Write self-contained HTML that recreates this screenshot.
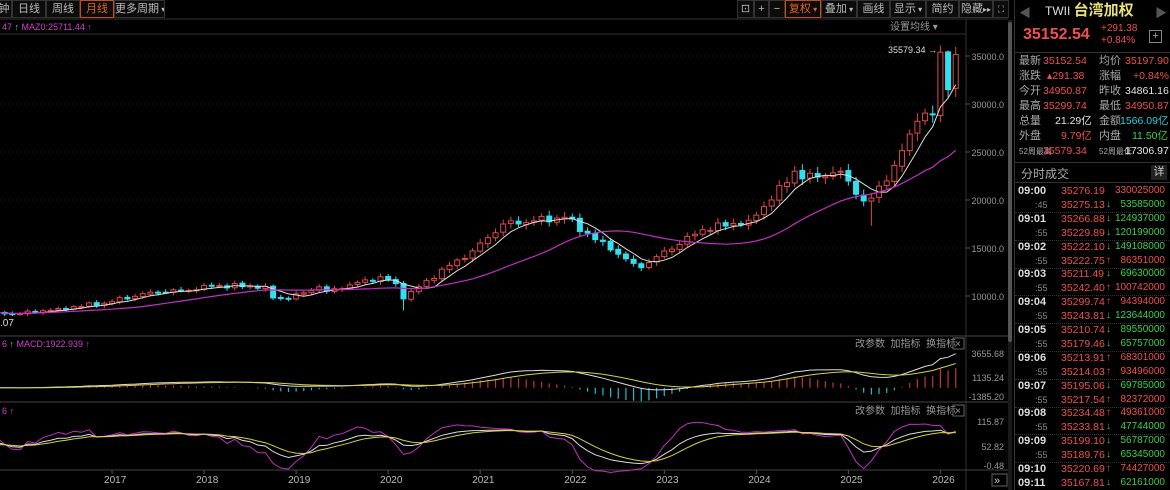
<!DOCTYPE html>
<html><head><meta charset="utf-8">
<style>
*{margin:0;padding:0;box-sizing:border-box}
body{width:1170px;height:490px;background:#000;overflow:hidden;font-family:"Liberation Sans","Noto Sans CJK SC",sans-serif;color:#ccc;position:relative}
.tb{position:absolute;top:0;height:18px;border:1px solid #333;background:#0c0c0c;font-size:11px;line-height:16px;text-align:center;color:#bbb;white-space:nowrap;overflow:hidden}
.tb small{font-size:8px}
.tb.on{border-color:#c0501e;color:#e0641e}
#chart{position:absolute;left:0;top:0}
.rp{position:absolute;left:1014px;top:0;width:156px;height:490px;border-left:1px solid #333;font-size:11px}
.row{position:absolute;left:4px;width:152px;height:15px;line-height:15px;white-space:nowrap}
.row span{position:absolute}
.row span.r,.row span.w,.row span.c,.row span.g{font-size:10.5px}
.r{color:#f05050}.g{color:#3ad24a}.w{color:#e6e6e6}.c{color:#2fd0e0}.lb{color:#aaa}
.tr{position:absolute;left:0;width:156px;height:14px;line-height:14px;font-size:10px;white-space:nowrap}
.tr span{position:absolute}
</style></head><body>
<svg id="chart" width="1014" height="490" xmlns="http://www.w3.org/2000/svg" font-family="Liberation Sans, Noto Sans CJK SC, sans-serif"></svg>

<div class="tb" style="left:-4px;width:16px">钟</div>
<div class="tb" style="left:12px;width:34px">日线</div>
<div class="tb" style="left:46px;width:34px">周线</div>
<div class="tb on" style="left:80px;width:34px">月线</div>
<div class="tb" style="left:114px;width:51px">更多周期<small> ▾</small></div>

<div class="tb" style="left:737px;width:17px">⊡</div>
<div class="tb" style="left:754px;width:15px">+</div>
<div class="tb" style="left:769px;width:16px">−</div>
<div class="tb on" style="left:785px;width:36px">复权<small> ▾</small></div>
<div class="tb" style="left:821px;width:36px">叠加<small> ▾</small></div>
<div class="tb" style="left:857px;width:33px">画线</div>
<div class="tb" style="left:890px;width:36px">显示<small> ▾</small></div>
<div class="tb" style="left:926px;width:33px">简约</div>
<div class="tb" style="left:959px;width:34px">隐藏<small>▸▸</small></div>
<div class="tb" style="left:993px;width:16px;font-size:9px">⛶</div>

<div class="rp">
  <div style="position:absolute;left:4px;top:4px;color:#555;font-size:12px">◀</div>
  <div style="position:absolute;left:30px;top:1px;font-size:12px;line-height:20px;color:#ddd">TWII <span style="color:#e8e070;font-size:15px;font-weight:bold">台湾加权</span></div>
  <div style="position:absolute;right:3px;top:4px;color:#555;font-size:12px">▶</div>
  <div style="position:absolute;left:8px;top:26px;color:#f05050;font-size:16px;font-weight:bold">35152.54</div>
  <div style="position:absolute;left:86px;top:23px;color:#f05050;font-size:10px;line-height:12px">+291.38<br>+0.84%</div>
  <div style="position:absolute;left:134px;top:30px;width:13px;height:13px;border:1px solid #888;color:#aaa;font-size:11px;line-height:11px;text-align:center">+</div>
  <div style="position:absolute;left:0;top:52px;width:156px;border-top:1px solid #333"></div>
  <div class="row" style="top:54px"><span class="lb">最新</span><span class="r" style="left:24px">35152.54</span><span class="lb" style="left:80px">均价</span><span class="r" style="left:106px">35197.90</span></div>
  <div class="row" style="top:69px"><span class="lb">涨跌</span><span class="r" style="left:28px">▴291.38</span><span class="lb" style="left:80px">涨幅</span><span class="r" style="left:114px">+0.84%</span></div>
  <div class="row" style="top:84px"><span class="lb">今开</span><span class="r" style="left:24px">34950.87</span><span class="lb" style="left:80px">昨收</span><span class="w" style="left:106px">34861.16</span></div>
  <div class="row" style="top:99px"><span class="lb">最高</span><span class="r" style="left:24px">35299.74</span><span class="lb" style="left:80px">最低</span><span class="r" style="left:106px">34950.87</span></div>
  <div class="row" style="top:114px"><span class="lb">总量</span><span class="w" style="left:36px">21.29亿</span><span class="lb" style="left:80px">金额</span><span class="c" style="left:101px">1566.09亿</span></div>
  <div class="row" style="top:129px"><span class="lb">外盘</span><span class="r" style="left:42px">9.79亿</span><span class="lb" style="left:80px">内盘</span><span class="g" style="left:113px">11.50亿</span></div>
  <div class="row" style="top:144px;font-size:8px"><span class="lb">52周最高</span><span class="r" style="left:24px">35579.34</span><span class="lb" style="left:80px">52周最低</span><span class="w" style="left:106px">17306.97</span></div>
  <div style="position:absolute;left:0;top:162px;width:156px;border-top:1px solid #333"></div>
  <div style="position:absolute;left:6px;top:165px;color:#aaa;font-size:12px">分时成交</div>
  <div style="position:absolute;right:3px;top:165px;width:16px;height:15px;background:#222;color:#ccc;font-size:11px;text-align:center;line-height:15px">详</div>
  <div style="position:absolute;left:0;top:182px;width:156px;border-top:1px solid #333"></div>
  <div id="trades"></div>
</div>
<div style="position:absolute;left:1008px;top:20px;width:4px;height:470px;background:#1a1a1a"></div>
<div style="position:absolute;left:1008px;top:22px;width:4px;height:320px;background:#555;border-radius:2px"></div>

<script>
const svg=document.getElementById('chart');
let h='';
function L(x1,y1,x2,y2,c,w,d){h+=`<line x1="${x1}" y1="${y1}" x2="${x2}" y2="${y2}" stroke="${c}" stroke-width="${w||1}" ${d?'stroke-dasharray="'+d+'"':''}/>`;}
function T(x,y,t,c,s,a){h+=`<text x="${x}" y="${y}" fill="${c}" font-size="${s||10}" ${a?'text-anchor="'+a+'"':''}>${t}</text>`;}
L(0,19,1008,19,'#333');L(0,34,965,34,'#333');
L(966,19,966,490,'#333');
L(0,336,1008,336,'#444');L(0,402,1008,402,'#444');L(0,470,1008,470,'#444');
const py=v=>56+(35000-v)*0.0096;
[35000,30000,25000,20000,15000,10000].forEach(v=>{L(0,py(v),966,py(v),'#2a1a1a',1,'1 3');T(1004,py(v)+4,v.toFixed(1),'#999',9,'end');L(966,py(v),970,py(v),'#555');});
T(2,30,'47 <tspan fill="#aaa">↑</tspan> MAZ0:25711.44 ↑','#d040d0',9);
T(890,30,'设置均线 ▾','#999',10);
const A=[[0,8200],[4,8150],[9,8700],[15,9250],[21,10400],[27,10650],[28,11100],[36,11000],[37,9800],[39,9730],[43,10950],[44,10500],[51,12000],[53,11300],[54,9700],[57,11600],[63,14700],[67,17500],[75,18200],[81,14800],[84,13400],[85,12950],[87,14100],[93,16900],[99,17900],[102,20000],[105,23000],[106,22200],[111,23000],[114,19900],[115,20200],[118,23600],[121,28200],[123,28900],[124,35400],[125,31500],[126,35152]];
const N=127;let C=[];
for(let m=0;m<N;m++){let i=0;while(A[i+1]&&A[i+1][0]<m)i++;let a=A[i],b=A[i+1]||A[i];
 let v=(b[0]==a[0])?a[1]:a[1]+(b[1]-a[1])*(m-a[0])/(b[0]-a[0]);
 let isA=A.some(q=>q[0]==m);if(!isA)v*=1+0.025*Math.sin(m*2.3)*Math.cos(m*0.7);C.push(v);}
const X=m=>20+(m-4)*7.67;
let O=[],H=[],Lo=[];
for(let m=0;m<N;m++){O[m]=m?C[m-1]*(1+0.004*Math.sin(m*5)):C[m]*0.98;let hi=Math.max(O[m],C[m]),lo=Math.min(O[m],C[m]);H[m]=hi*(1+0.015+0.015*Math.abs(Math.sin(m*1.7)));Lo[m]=lo*(1-0.015-0.015*Math.abs(Math.cos(m*1.3)));}
Lo[54]=8500;Lo[115]=17306;H[125]=35579;
function ma(n){return C.map((v,i)=>{let s=0,k=0;for(let j=Math.max(0,i-n+1);j<=i;j++){s+=C[j];k++;}return s/k;});}
function poly(arr,fy,c,w){h+=`<polyline fill="none" stroke="${c}" stroke-width="${w||1}" points="${arr.map((v,i)=>X(i).toFixed(1)+','+fy(v).toFixed(1)).join(' ')}"/>`;}
for(let m=0;m<N;m++){let x=X(m);if(x<0||x>962)continue;let up=C[m]>=O[m];let col=up?'#e04848':'#30e0f0';
 L(x,py(H[m]),x,py(Lo[m]),col);let t=py(Math.max(O[m],C[m])),b=py(Math.min(O[m],C[m]));if(b-t<1)b=t+1;
 h+=`<rect x="${x-2.5}" y="${t}" width="5" height="${b-t}" fill="${up?'#000':col}" stroke="${col}" stroke-width="1"/>`;}
poly(ma(5),py,'#ddd',1);poly(ma(20),py,'#c030c0',1.2);
T(888,53,'35579.34 →','#ddd',9);
T(0,326,'.07','#ddd',10);
function ema(a,n){let r=[],k=2/(n+1);a.forEach((v,i)=>r.push(i?r[i-1]+(v-r[i-1])*k:v));return r;}
let e12=ema(C,12),e26=ema(C,26),dif=e12.map((v,i)=>v-e26[i]),dea=ema(dif,9);
const my=v=>377-(v-1135)*0.0095;const mz=my(0);
for(let m=0;m<N;m++){let x=X(m);if(x<0||x>962)continue;let b=2*(dif[m]-dea[m]);L(x,mz,x,my(b),b>=0?'#c03838':'#20c0d0',1.2);}
poly(dif,my,'#ddd');poly(dea,my,'#d8d040');
T(2,347,'6 <tspan fill="#c0b040">↑</tspan> MACD:1922.939 ↑','#d040d0',9);
T(855,347,'改参数 &#160;加指标 &#160;换指标','#999',10);
h+='<rect x="953" y="338" width="11" height="11" fill="none" stroke="#666"/>';T(955,347,'×','#999',10);
[[3655.68,353],[1135.24,377],[-1385.20,396]].forEach(a=>{T(1004,a[1]+4,a[0].toFixed(2),'#999',9,'end');});
let K=[],D=[],J=[];let kp=50,dp=50;
for(let m=0;m<N;m++){let hh=-1e9,ll=1e9;for(let j=Math.max(0,m-8);j<=m;j++){hh=Math.max(hh,H[j]);ll=Math.min(ll,Lo[j]);}
 let rsv=(C[m]-ll)/(hh-ll)*100;kp=kp*2/3+rsv/3;dp=dp*2/3+kp/3;K.push(kp);D.push(dp);J.push(3*kp-2*dp);}
const ky=v=>446-(v-52.82)*0.4;
poly(J,ky,'#c030c0');poly(K,ky,'#ddd');poly(D,ky,'#d8d040');
T(2,414,'6 ↑','#d040d0',9);
T(855,414,'改参数 &#160;加指标 &#160;换指标','#999',10);
h+='<rect x="953" y="405" width="11" height="11" fill="none" stroke="#666"/>';T(955,414,'×','#999',10);
[[115.87,421],[52.82,446],[-0.48,465]].forEach(a=>{T(1004,a[1]+4,a[0].toFixed(2),'#999',9,'end');});
for(let y=2017;y<=2026;y++){let x=20+(12*(y-2016))*7.67;L(x,470,x,474,'#555');T(x-8,483,y,'#bbb',10);}
h+='<rect x="992" y="474" width="15" height="12" fill="none" stroke="#666"/>';T(994,484,'»','#ccc',11);
svg.innerHTML=h;
const tr=[['09:00','35276.19','','330025000'],[':45','35275.13','d','53585000'],['09:01','35266.88','d','124937000'],[':55','35229.89','d','120199000'],['09:02','35222.10','d','149108000'],[':55','35222.75','u','86351000'],['09:03','35211.49','d','69630000'],[':55','35242.40','u','100742000'],['09:04','35299.74','u','94394000'],[':55','35243.81','d','123644000'],['09:05','35210.74','d','89550000'],[':55','35179.46','d','65757000'],['09:06','35213.91','u','68301000'],[':55','35214.03','u','93496000'],['09:07','35195.06','d','69785000'],[':55','35217.54','u','82372000'],['09:08','35234.48','u','49361000'],[':55','35233.81','d','47744000'],['09:09','35199.10','d','56787000'],[':55','35189.76','d','65345000'],['09:10','35220.69','u','74427000'],['09:11','35167.81','d','62161000']];
let th='';
tr.forEach((r,i)=>{let top=184+i*13.9;let vc=r[2]=='d'?'#3ad24a':'#f05050';let ar=r[2]=='d'?'<span style="color:#3ad24a;left:91px;font-weight:bold">↓</span>':r[2]=='u'?'<span style="color:#f05050;left:91px;font-weight:bold">↑</span>':'';
 th+=`<div class="tr" style="top:${top}px">${r[0][0]==':'?'<span style="left:20px;color:#888;font-size:9px">'+r[0]+'</span>':'<span style="left:3px;color:#ddd;font-weight:bold;font-size:11px">'+r[0]+'</span>'}<span style="left:46px;color:#f05050;font-size:10.5px">${r[1]}</span>${ar}<span style="right:6px;color:${vc};font-size:10px">${r[3]}</span></div>`;
 if(i%2==1&&i<21)th+=`<div style="position:absolute;left:0;top:${top+14}px;width:156px;border-top:1px dotted #333"></div>`;});
document.getElementById('trades').innerHTML=th;
</script>
</body></html>
